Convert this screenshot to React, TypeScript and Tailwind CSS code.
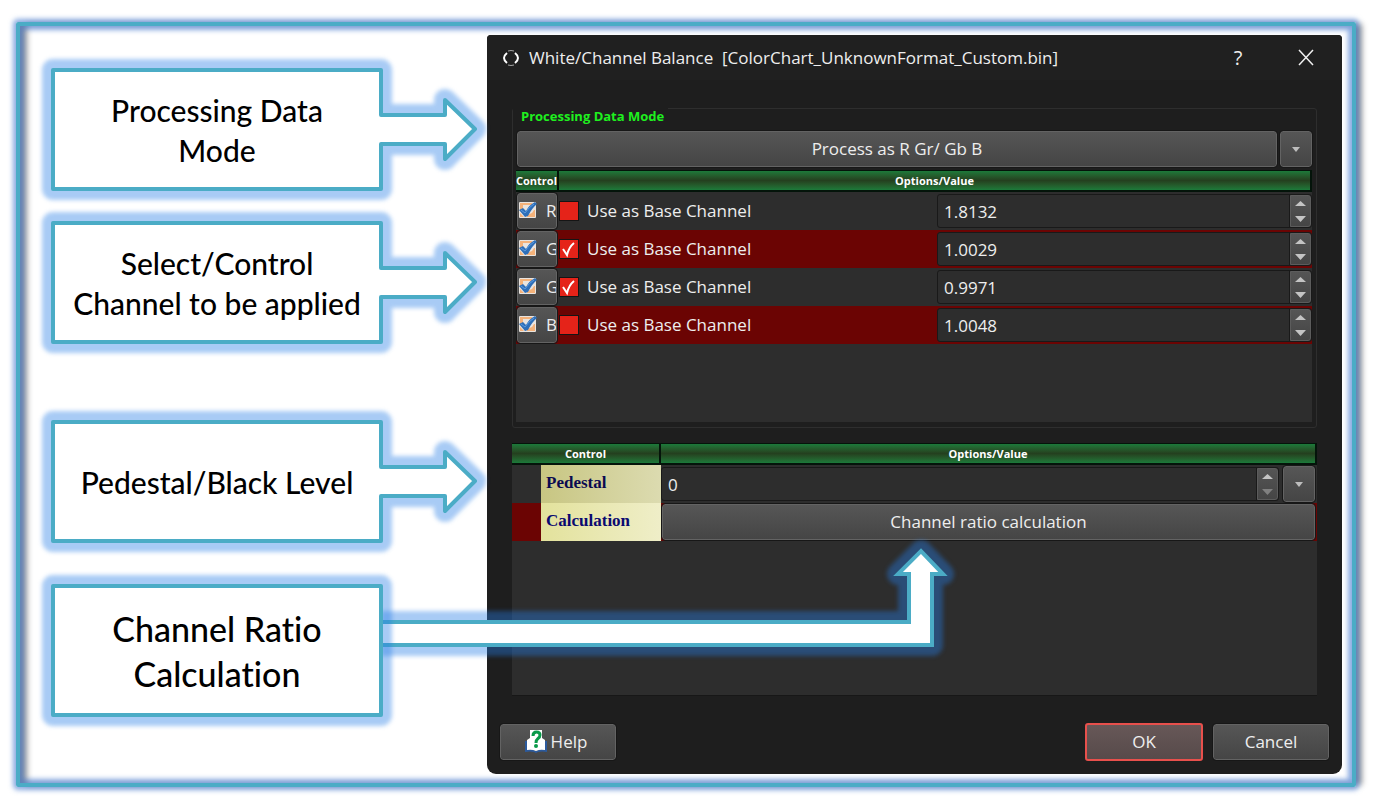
import { useState } from "react";

type Channel = { id: string; label: string; base: boolean; value: string };

const CHANNELS: Channel[] = [
  { id: "r", label: "R", base: false, value: "1.8132" },
  { id: "gr", label: "Gr", base: true, value: "1.0029" },
  { id: "gb", label: "Gb", base: true, value: "0.9971" },
  { id: "b", label: "B", base: false, value: "1.0048" },
];

const BUTTON =
  "rounded-[3px] border border-[#636363] bg-linear-to-b from-[#565656] to-[#454545] text-[#eeeeee] outline outline-[#171717]";

const HEADER =
  "h-[22px] border-t border-r-2 border-b-2 border-[#04140a] bg-linear-to-b from-[#1b7a3a] via-[#24401f] to-[#1b7a3a] p-0 text-center text-[11px] leading-4 font-bold whitespace-nowrap text-white";

const ARROW_BOX = "M2 2H330V47H394V32L424 61L394 91V76H330V121H2Z";
const PLAIN_BOX = "M2 2H330V131H2Z";
const ELBOW = "M330 38H858V-10H847L870 -33L892 -10H881V61H330";

// white shape with a teal outline and a soft blue halo
function GlowShape({ d, miter = false }: { d: string; miter?: boolean }) {
  return (
    <g strokeLinejoin={miter ? "miter" : "round"}>
      <path
        d={d}
        fill="none"
        stroke="#257de6"
        strokeOpacity="0.4"
        strokeWidth="22"
        strokeLinejoin="round"
        className="blur-[2px]"
      />
      <path d={d} fill="#fff" stroke="#4bacc6" strokeWidth="4" />
    </g>
  );
}

function Callout({ children, large = false }: { children: React.ReactNode; large?: boolean }) {
  return (
    <div className={`relative z-10 w-[332px] shrink-0 ${large ? "h-[133px]" : "h-[123px]"}`}>
      <svg className="pointer-events-none absolute top-0 left-0 h-full w-full overflow-visible" aria-hidden="true">
        {large && <GlowShape d={ELBOW} miter />}
        <GlowShape d={large ? PLAIN_BOX : ARROW_BOX} />
      </svg>
      <p
        className={`relative flex h-full flex-col items-center justify-center text-center font-[Lato,sans-serif] font-medium [font-variant-ligatures:none] whitespace-nowrap text-black ${
          large ? "text-[34px] leading-[45px]" : "text-[30px] leading-10"
        }`}
      >
        {children}
      </p>
    </div>
  );
}

function EditCheckIcon() {
  return (
    <svg className="size-5 shrink-0" viewBox="0 0 20 20" aria-hidden="true">
      <rect x="1" y="1" width="17" height="16" rx="1" fill="#e9e4df" />
      <path d="M2 2h12v2H5v5H2zM17 9v7H9v-2l5-2 2-3zM2 12l4 4H2z" fill="#f4b27a" />
      <path d="M1 9l4-2 3 3q3-6 9-9l2 2q-5 4-9 12l-3 1z" fill="#2f6fb8" />
      <path d="M3 9l4 3q4-6 9-9" fill="none" stroke="#5c9be0" strokeWidth="1" />
    </svg>
  );
}

function HelpIcon() {
  return (
    <svg className="h-6 w-[22px] shrink-0" viewBox="0 0 22 24" aria-hidden="true">
      <path d="M0 11h2v8q5 0 9 2q4-2 9-2v-8h2v11q-5-1-9 0l-2 1l-2-1q-4-1-9 0z" fill="#2c5a9c" />
      <path d="M2 10l3-2V0h12v8l3 2v10q-5-1-9 1q-4-2-9-1z" fill="#fff" />
      <path d="M8 6q0-4 3.500-4t3.500 3q0 2-2 3.500t-2 4.500" fill="none" stroke="#0a9a4a" strokeWidth="3" />
      <rect x="9" y="14" width="4" height="4" rx="2" fill="#0a9a4a" />
    </svg>
  );
}

function Caret() {
  return (
    <svg className="mx-auto h-[5px] w-2" viewBox="0 0 8 5" aria-hidden="true">
      <path d="M0 0h8L4 5z" fill="#bdbdbd" />
    </svg>
  );
}

function Spinner({ name, downOff = false }: { name: string; downOff?: boolean }) {
  return (
    <div className="flex h-8 w-[21px] shrink-0 flex-col rounded-r-[3px] border border-[#5c5c5c] bg-linear-to-b from-[#555] to-[#454545]">
      <button type="button" aria-label={`Increase ${name}`} className="flex flex-1 items-center justify-center">
        <svg className="h-[5px] w-[11px]" viewBox="0 0 11 5">
          <path d="M0 5h11L5.500 0z" fill="#c4c4c4" />
        </svg>
      </button>
      <button type="button" aria-label={`Decrease ${name}`} className="flex flex-1 items-center justify-center">
        <svg className="h-[6px] w-[11px]" viewBox="0 0 11 6">
          <path d="M0 0h11L5.500 6z" fill={downOff ? "#808080" : "#c4c4c4"} />
        </svg>
      </button>
    </div>
  );
}

function ValueBox({ name, value, downOff }: { name: string; value: string; downOff?: boolean }) {
  const [text, setText] = useState(value);
  return (
    <div className="flex h-[34px] min-w-0 flex-1 items-center rounded-[3px] border border-[#191919] bg-[#2d2d2d]">
      <input
        type="text"
        aria-label={name}
        value={text}
        onChange={(e) => setText(e.target.value)}
        className="h-full min-w-0 flex-1 border-r border-[#191919] bg-transparent px-1.5 text-[17px] text-[#eeeeee] outline-none"
      />
      <Spinner name={name} downOff={downOff} />
    </div>
  );
}

function ChannelRow({ channel }: { channel: Channel }) {
  const [base, setBase] = useState(channel.base);
  return (
    <tr className="h-[38px] even:bg-[#6b0403]">
      <td className="p-0">
        <button type="button" className={`${BUTTON} mx-px flex h-9 w-10 items-center gap-2 overflow-hidden text-[17px]`}>
          <EditCheckIcon />
          <span>{channel.label}</span>
        </button>
      </td>
      <td className="p-0">
        <div className="flex items-center">
          <label className="flex w-[378px] shrink-0 items-center gap-2 text-[17px] leading-6">
            <span className="relative size-5">
              <input
                type="checkbox"
                checked={base}
                onChange={(e) => setBase(e.target.checked)}
                className="block size-5 appearance-none border border-[#151515] bg-[#e52319]"
              />
              {base && (
                <svg className="pointer-events-none absolute inset-0 size-5" viewBox="0 0 20 20">
                  <path d="M4 10l4 6q2-8 7-12" fill="none" stroke="#fff" strokeWidth="2" />
                </svg>
              )}
            </span>
            Use as Base Channel
          </label>
          <ValueBox name={`${channel.label} value`} value={channel.value} />
        </div>
      </td>
    </tr>
  );
}

function Dialog() {
  return (
    <section className="flex min-w-0 flex-1 flex-col rounded-t-[4px] rounded-b-[9px] bg-[#1e1e1e] text-[17px] text-[#eeeeee]">
      <header className="flex h-[45px] items-center rounded-t-[4px] bg-[#202020] pr-[26px] pl-[14px]">
        <svg className="mr-2 size-5 shrink-0" viewBox="0 0 20 20" fill="none" stroke="#fff" aria-hidden="true">
          <path d="M6 5q-6 5 0 10M14 5q6 5 0 10" strokeWidth="2" />
          <path d="M7 3q3-1 6 0M7 17q3 1 6 0" strokeWidth="1" strokeOpacity="0.6" />
        </svg>
        <h1 className="flex-1 text-[17px] whitespace-pre">White/Channel Balance  [ColorChart_UnknownFormat_Custom.bin]</h1>
        <button type="button" aria-label="What's this" className="mr-12 w-5 text-[20px]">
          ?
        </button>
        <button type="button" aria-label="Close" className="w-5">
          <svg className="size-5" viewBox="0 0 20 20" stroke="#f0f0f0" strokeWidth="1.5">
            <path d="M3 2l14 15M17 2L3 17" />
          </svg>
        </button>
      </header>

      <div className="px-[25px] pt-[11px]">
        <fieldset className="rounded-[3px] border border-[#2e2e2e] px-[3px] pb-[5px]">
          <legend className="-ml-[3px] pt-[17px] pr-1 pl-2 text-[13px] leading-[17px] font-bold text-[#1ff01f]">
            Processing Data Mode
          </legend>
          <div className="mt-[6px] flex h-9 gap-[3px] px-px">
            <button type="button" className={`${BUTTON} flex-1`}>
              Process as R Gr/ Gb B
            </button>
            <button type="button" aria-label="Choose processing mode" className={`${BUTTON} w-8`}>
              <Caret />
            </button>
          </div>
          <div className="mr-px mt-[3px] min-h-[252px] bg-[#2d2d2d]">
            <table className="w-full table-fixed border-separate border-spacing-0">
              <thead>
                <tr>
                  <th className={`${HEADER} w-[43px]`}>Control</th>
                  <th className={HEADER}>Options/Value</th>
                </tr>
              </thead>
              <tbody>
                {CHANNELS.map((c) => (
                  <ChannelRow key={c.id} channel={c} />
                ))}
              </tbody>
            </table>
          </div>
        </fieldset>

        <div className="mt-[15px] min-h-[253px] border-b border-[#171717] bg-[#2d2d2d]">
          <table className="w-full table-fixed border-separate border-spacing-0">
            <thead>
              <tr>
                <th className={`${HEADER} w-[149px]`}>Control</th>
                <th className={HEADER}>Options/Value</th>
              </tr>
            </thead>
            <tbody>
              <tr className="h-[38px]">
                <td className="p-0 pl-[29px]">
                  <div className="h-[38px] bg-linear-to-r from-[#c8c682] to-[#dcdbb0] pl-[5px] font-['Liberation_Serif',serif] text-[17px] leading-9 font-bold text-[#0a0a50]">
                    Pedestal
                  </div>
                </td>
                <td className="p-0">
                  <div className="flex items-center gap-1 pr-[2px]">
                    <ValueBox name="Pedestal" value="0" downOff />
                    <button type="button" aria-label="Pedestal options" className={`${BUTTON} h-9 w-8`}>
                      <Caret />
                    </button>
                  </div>
                </td>
              </tr>
              <tr className="h-[38px] bg-[#6b0403]">
                <td className="p-0 pl-[29px]">
                  <div className="h-[38px] bg-linear-to-r from-[#e3e29c] to-[#efeec8] pl-[5px] font-['Liberation_Serif',serif] text-[17px] leading-9 font-bold text-[#0a0a70]">
                    Calculation
                  </div>
                </td>
                <td className="p-0 pr-[2px] pl-px">
                  <button type="button" className={`${BUTTON} block h-9 w-full`}>
                    Channel ratio calculation
                  </button>
                </td>
              </tr>
            </tbody>
          </table>
        </div>
      </div>

      <footer className="flex items-center gap-[10px] px-[13px] pt-[27px] pb-[13px]">
        <button type="button" className={`${BUTTON} mr-auto flex h-9 w-[116px] items-center justify-center gap-1 pr-1`}>
          <HelpIcon />
          Help
        </button>
        <button
          type="button"
          className="h-[38px] w-[118px] rounded-[3px] border-2 border-[#e8504c] bg-linear-to-b from-[#675858] to-[#574a4a]"
        >
          OK
        </button>
        <button type="button" className={`${BUTTON} h-9 w-[116px]`}>
          Cancel
        </button>
      </footer>
    </section>
  );
}

export default function App() {
  return (
    <main className="min-h-screen bg-white pt-[22px] pr-7 pb-[22px] pl-4 font-['Open_Sans','Noto_Sans',sans-serif]">
      <div className="flex rounded-[2px] border-4 border-[#4bacc6] pt-[9px] pr-[10px] pb-[9px] shadow-[0_0_5px_3px_rgba(60,115,205,0.6),8px_0_6px_-2px_rgba(0,0,0,0.4),inset_0_0_5px_4px_rgba(60,115,205,0.6),inset_9px_0_6px_-2px_rgba(0,0,0,0.4)]">
        <div className="flex w-[467px] shrink-0 flex-col pt-[33px] pl-[31px]">
          <Callout>
            <span>Processing Data</span>
            <span>Mode</span>
          </Callout>
          <div className="mt-[30px]">
            <Callout>
              <span>Select/Control</span>
              <span>Channel to be applied</span>
            </Callout>
          </div>
          <div className="mt-[76px] mb-[41px]">
            <Callout>
              <span>Pedestal/Black Level</span>
            </Callout>
          </div>
          <Callout large>
            <span>Channel Ratio</span>
            <span>Calculation</span>
          </Callout>
        </div>
        <Dialog />
      </div>
    </main>
  );
}
